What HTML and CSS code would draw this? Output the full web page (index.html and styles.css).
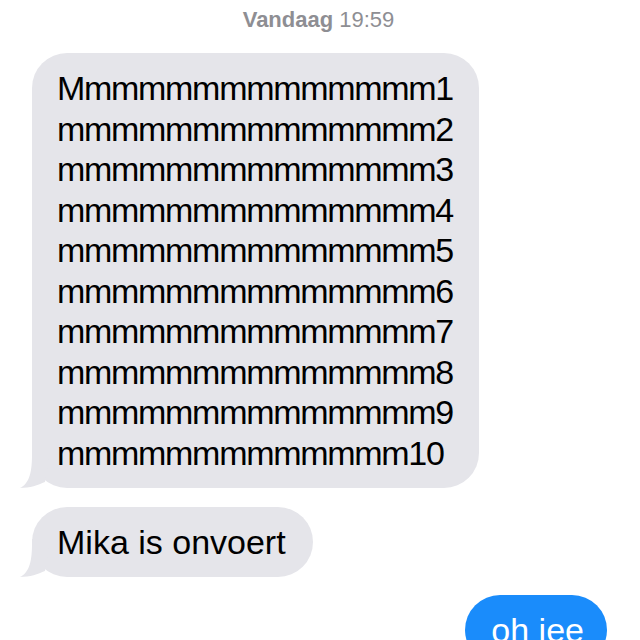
FILE: index.html
```html
<!DOCTYPE html>
<html lang="nl">
<head>
  <meta charset="UTF-8">
  <title>Berichten</title>
  <link rel="stylesheet" href="styles.css">
</head>
<body>

  <div class="gesprek">
    <div class="tijd"><strong>Vandaag</strong> 19:59</div>

    <div class="bericht ontvangen lang">
      Mmmmmmmmmmmmmm1<br>
      mmmmmmmmmmmmmm2<br>
      mmmmmmmmmmmmmm3<br>
      mmmmmmmmmmmmmm4<br>
      mmmmmmmmmmmmmm5<br>
      mmmmmmmmmmmmmm6<br>
      mmmmmmmmmmmmmm7<br>
      mmmmmmmmmmmmmm8<br>
      mmmmmmmmmmmmmm9<br>
      mmmmmmmmmmmmm10
      <svg class="staart" width="32" height="40" viewBox="0 0 32 40"><path d="M14 0 L14 5 C14 25 10 34 2 38 C12 38 20 35 27 32 L32 0 Z" fill="#e5e5ea"/></svg>
    </div>

    <div class="bericht ontvangen">
      Mika is onvoert
      <svg class="staart" width="32" height="40" viewBox="0 0 32 40"><path d="M14 0 L14 5 C14 25 10 34 2 38 C12 38 20 35 27 32 L32 0 Z" fill="#e5e5ea"/></svg>
    </div>

    <div class="bericht verzonden">oh jee</div>
  </div>

</body>
</html>
```

FILE: styles.css
```css
body {
  margin: 0;
  background-color: #ffffff;
  font-family: "Liberation Sans", Arial, sans-serif;
}

.gesprek {
  display: flex;
  flex-direction: column;
  align-items: flex-start;
  height: 640px;
  overflow: hidden;
}

.tijd {
  align-self: center;
  margin: 8px 0 21px -3px;
  font-size: 22px;
  line-height: 24px;
  color: #8e8e93;
}

.bericht {
  position: relative;
  font-size: 34px;
  line-height: 40px;
  padding: 15px 25px;
  border-radius: 35px;
  white-space: nowrap;
}

.ontvangen {
  margin-left: 32px;
  background-color: #e5e5ea;
  color: #000000;
}

.lang {
  line-height: 40.5px;
  letter-spacing: -1.3px;
  padding-right: 26px;
  margin-bottom: 19px;
}

.ontvangen:not(.lang) {
  padding-right: 27px;
}

.verzonden {
  align-self: flex-end;
  margin: 18px 33px 0 0;
  padding-left: 26px;
  padding-right: 23px;
  background-color: #1a8cfb;
  color: #ffffff;
}

.staart {
  position: absolute;
  left: -14px;
  bottom: -2px;
}
```
